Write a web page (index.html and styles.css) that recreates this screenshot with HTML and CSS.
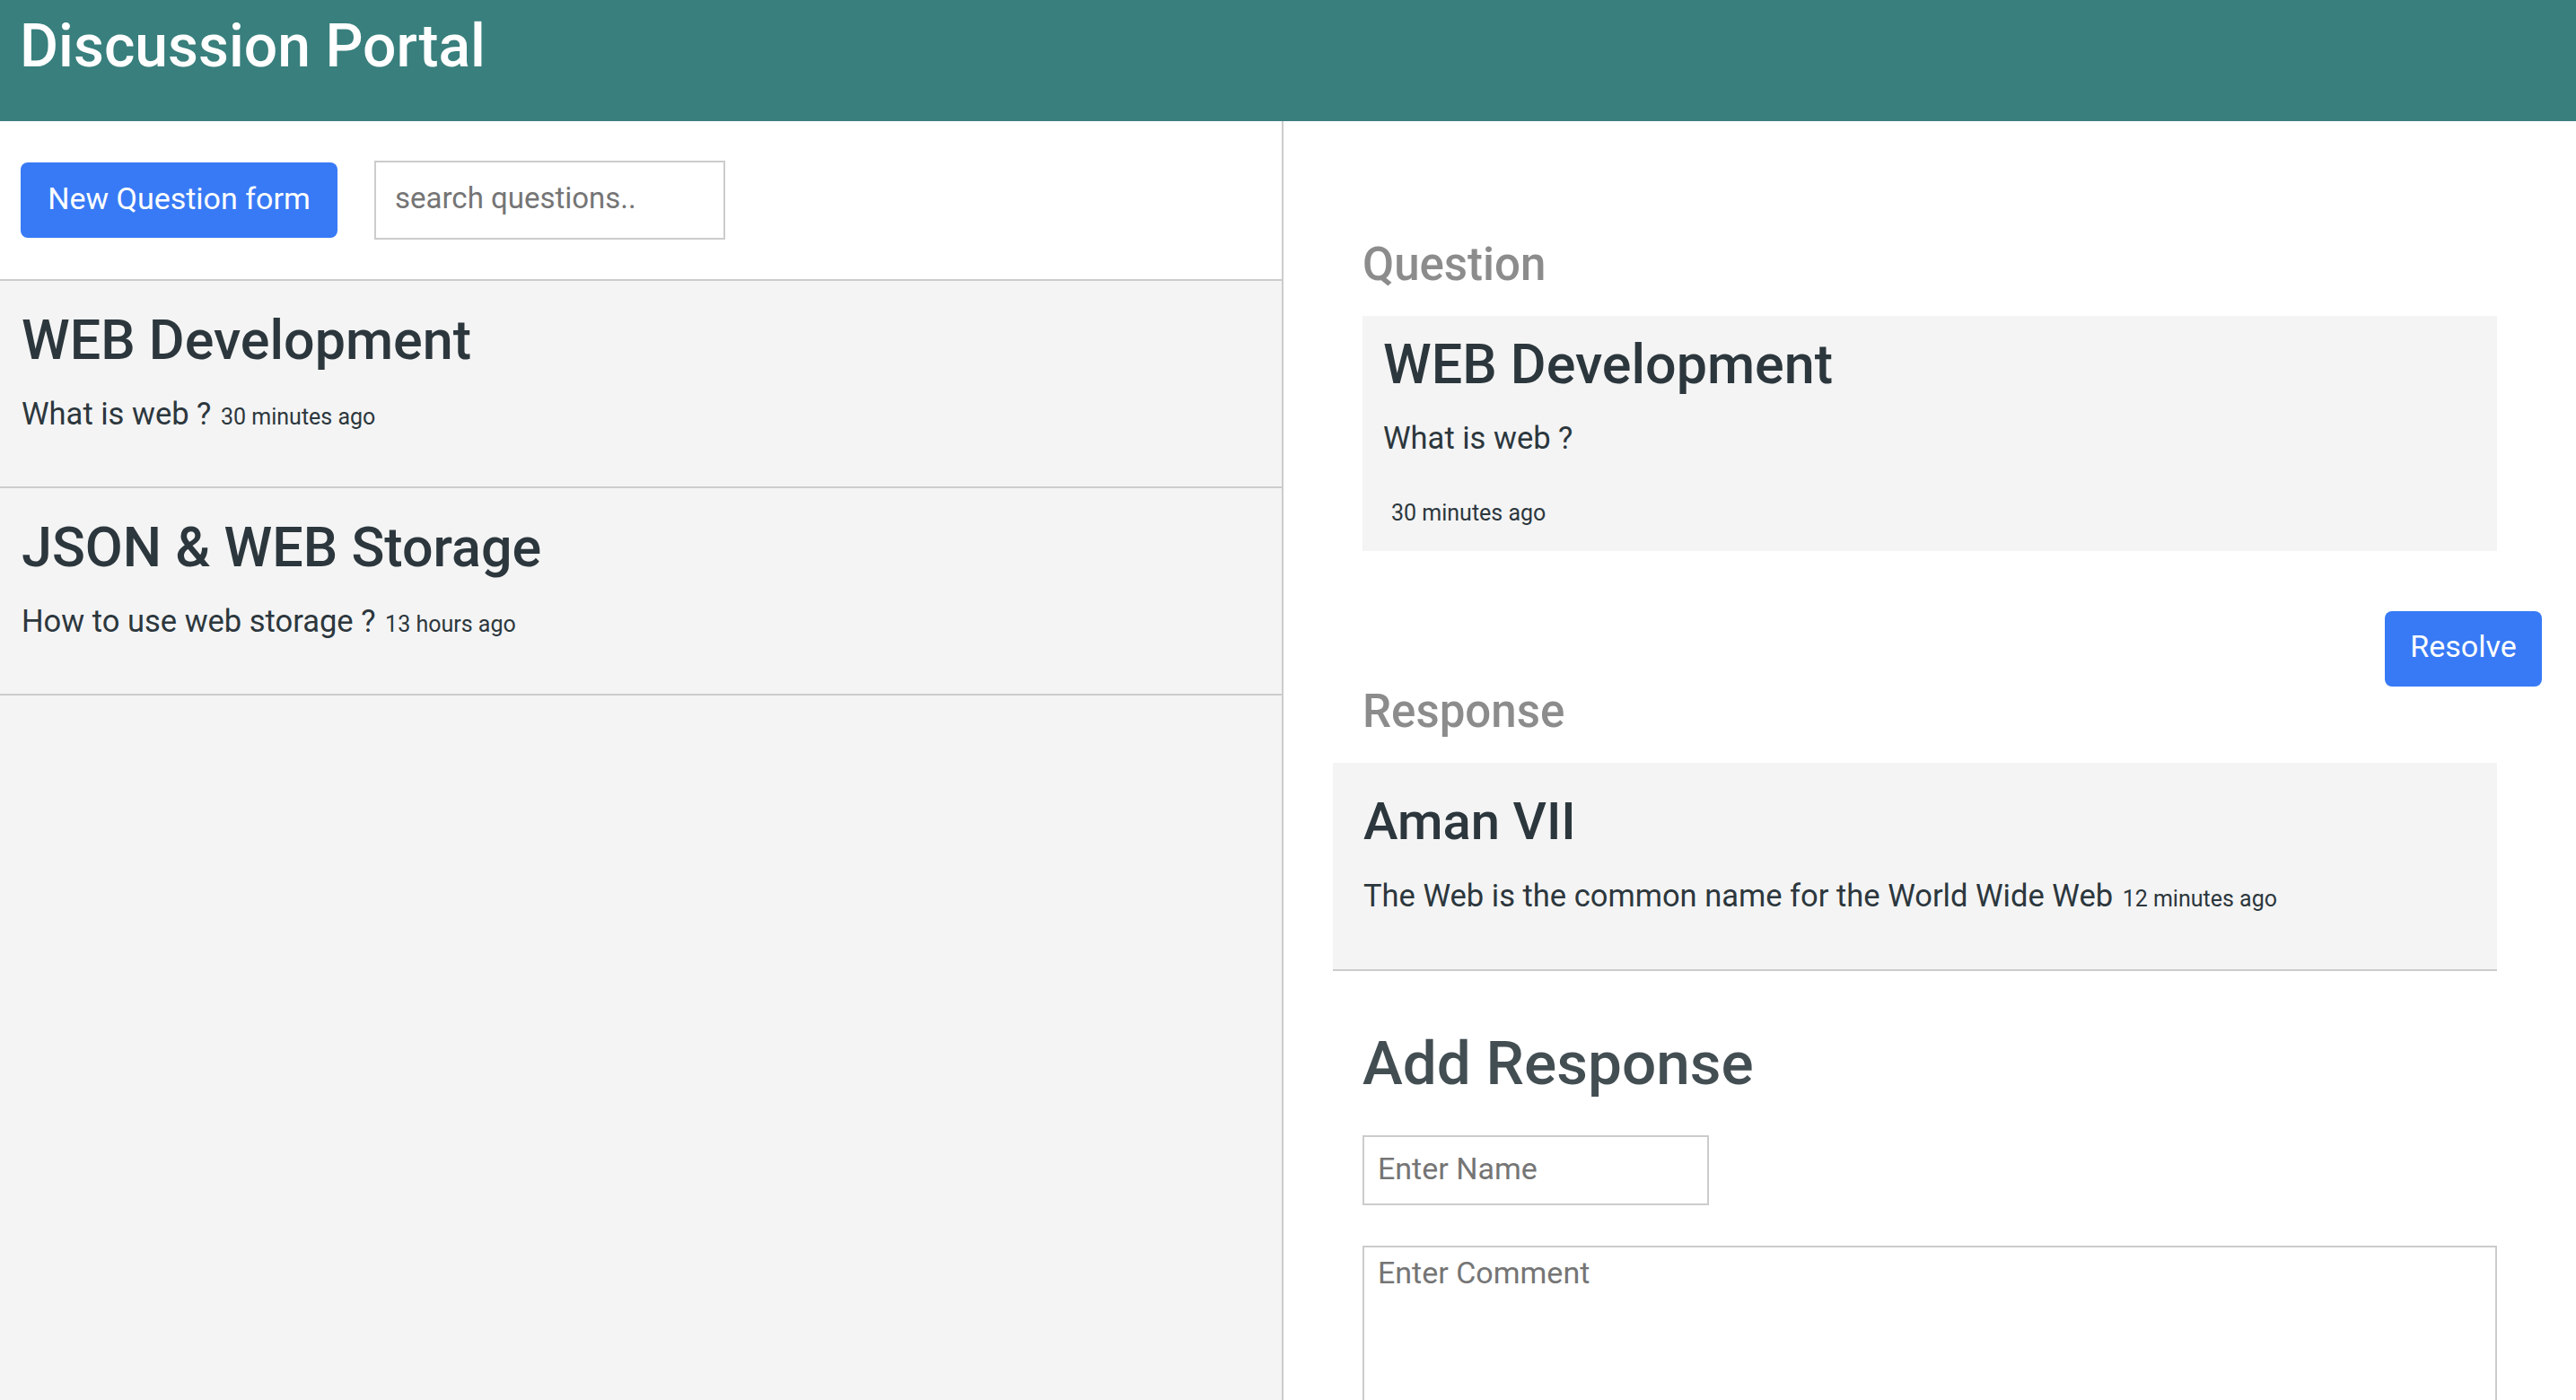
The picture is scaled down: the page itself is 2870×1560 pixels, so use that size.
FILE: index.html
```html
<!DOCTYPE html>
<html lang="en">
<head>
<meta charset="utf-8">
<title>Discussion Portal</title>
<link rel="stylesheet" href="styles.css">
</head>
<body>
<header class="topbar">
  <h1 class="brand">Discussion Portal</h1>
</header>
<main class="layout">
  <aside class="left">
    <div class="toolbar">
      <button class="btn btn-new">New Question form</button>
      <input class="search" type="text" placeholder="search questions..">
    </div>
    <div class="qitem">
      <h2 class="qtitle">WEB Development</h2>
      <p class="qtext">What is web ? <span class="time">30 minutes ago</span></p>
    </div>
    <div class="qitem">
      <h2 class="qtitle">JSON &amp; WEB Storage</h2>
      <p class="qtext">How to use web storage ? <span class="time">13 hours ago</span></p>
    </div>
  </aside>
  <section class="right">
    <h3 class="section-label">Question</h3>
    <div class="qcard">
      <h2 class="qtitle">WEB Development</h2>
      <p class="qtext">What is web ?</p>
      <p class="qtime">30 minutes ago</p>
    </div>
    <div class="resolve-row">
      <button class="btn btn-resolve">Resolve</button>
    </div>
    <h3 class="section-label label-response">Response</h3>
    <div class="rcard">
      <h2 class="rname">Aman VII</h2>
      <p class="qtext">The Web is the common name for the World Wide Web <span class="time">12 minutes ago</span></p>
    </div>
    <h2 class="add-title">Add Response</h2>
    <input class="name-input" type="text" placeholder="Enter Name">
    <textarea class="comment" placeholder="Enter Comment"></textarea>
  </section>
</main>
</body>
</html>
```
FILE: styles.css
```css
* { box-sizing: border-box; }
html, body { margin: 0; padding: 0; }
body {
  font-family: Roboto, "Noto Sans", Arial, sans-serif;
  color: #2c373d;
  background: #ffffff;
}
h1, h2, h3, p { margin: 0; font-weight: 400; }

.topbar {
  height: 135px;
  background: #387f7d;
  padding: 19px 0 0 22px;
}
.brand {
  color: #ffffff;
  font-size: 66px;
  line-height: 66px;
  font-weight: 500;
}

.layout {
  display: flex;
  min-height: 1425px;
}

.left {
  width: 1430px;
  flex: 0 0 1430px;
  background: #f4f4f4;
  border-right: 2px solid #cccccc;
}
.toolbar {
  height: 178px;
  background: #ffffff;
  border-bottom: 2px solid #cccccc;
  display: flex;
  align-items: center;
  gap: 41px;
  padding: 0 0 0 23px;
}
.btn {
  border: none;
  background: #387af5;
  color: #ffffff;
  font-family: Roboto, "Noto Sans", Arial, sans-serif;
  font-size: 34px;
  border-radius: 8px;
  cursor: pointer;
  padding: 0 0 5px;
}
.btn-new {
  width: 353px;
  height: 84px;
}
.search {
  width: 391px;
  height: 88px;
  border: 2px solid #cccccc;
  padding: 0 0 5px 21px;
  font-family: Roboto, "Noto Sans", Arial, sans-serif;
  font-size: 33px;
  color: #333;
  outline: none;
}
.search::placeholder, .name-input::placeholder, .comment::placeholder { color: #757575; }

.qitem {
  height: 231px;
  padding: 35px 24px 0;
  border-bottom: 2px solid #cccccc;
}
.qtitle {
  font-size: 61px;
  line-height: 62px;
  font-weight: 500;
  color: #2c373d;
}
.qtext {
  margin-top: 34px;
  font-size: 34.5px;
  line-height: 34.5px;
}
.time {
  font-size: 25px;
  margin-left: 2px;
}

.right {
  flex: 1;
  padding: 135px 88px 0 88px;
  display: flex;
  flex-direction: column;
  align-items: flex-start;
}
.section-label {
  font-size: 51px;
  line-height: 50px;
  color: #8c8c8c;
  font-weight: 500;
}
.qcard {
  align-self: stretch;
  margin-top: 32px;
  background: #f4f4f4;
  padding: 23px 23px 30px;
}
.qcard .qtext { margin-top: 34px; }
.qtime {
  margin-top: 53px;
  padding-left: 9px;
  font-size: 25px;
  line-height: 25px;
}
.resolve-row {
  align-self: stretch;
  display: flex;
  justify-content: flex-end;
  margin-top: 67px;
  margin-right: -50px;
}
.btn-resolve {
  width: 175px;
  height: 84px;
}
.label-response { margin-top: 3px; }
.rcard {
  align-self: stretch;
  margin-left: -33px;
  margin-top: 32px;
  background: #f4f4f4;
  border-bottom: 2px solid #cccccc;
  padding: 36px 34px 0;
  height: 232px;
}
.rname {
  font-size: 58px;
  line-height: 58px;
  font-weight: 500;
}
.rcard .qtext { margin-top: 37px; }
.add-title {
  margin-top: 69px;
  font-size: 67.5px;
  line-height: 67.5px;
  font-weight: 500;
  color: #434e53;
}
.name-input {
  margin-top: 47px;
  width: 386px;
  height: 78px;
  border: 2px solid #cccccc;
  padding: 0 0 5px 15px;
  font-family: Roboto, "Noto Sans", Arial, sans-serif;
  font-size: 34px;
  outline: none;
}
.comment {
  align-self: stretch;
  margin-top: 45px;
  height: 320px;
  border: 2px solid #cccccc;
  padding: 8px 15px;
  font-family: Roboto, "Noto Sans", Arial, sans-serif;
  font-size: 34px;
  resize: none;
  outline: none;
}
```
